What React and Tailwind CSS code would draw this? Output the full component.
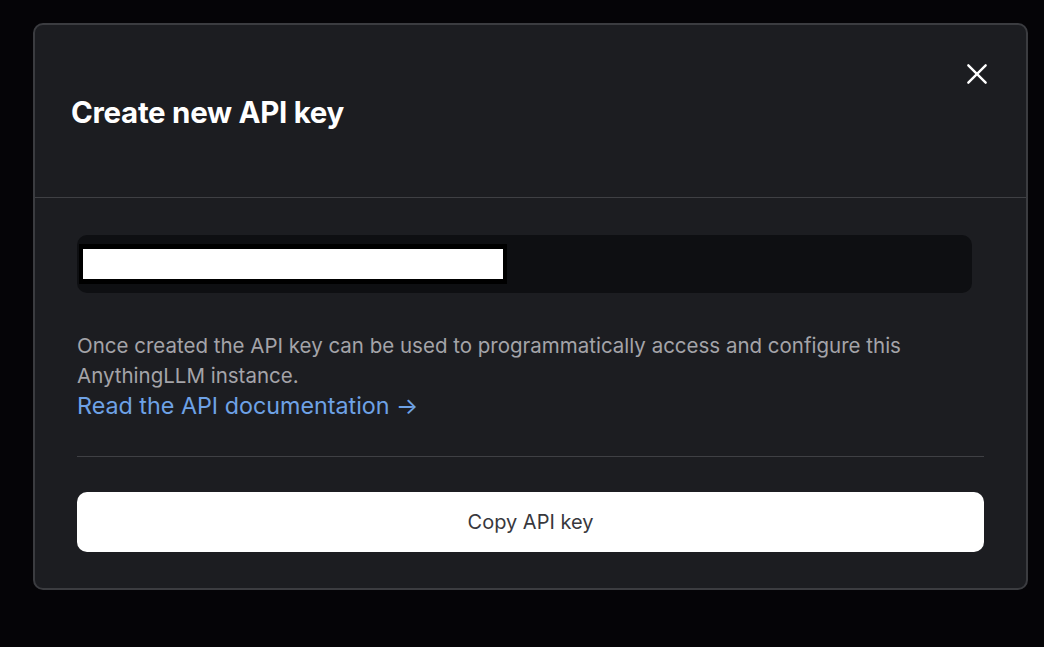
import React from 'react';

const CloseIcon = () => (
  <svg width="26" height="26" viewBox="0 0 24 24" fill="none" stroke="currentColor" strokeWidth="2.2" strokeLinecap="round">
    <path d="M4 4L20 20M20 4L4 20" />
  </svg>
);

export default function App() {
  return (
    <div
      className="w-[1044px] h-[647px] bg-[#050407] pt-[23px] pl-[33px]"
      style={{ fontFamily: 'Inter, "Noto Sans", sans-serif' }}
    >
      <div className="w-[995px] h-[567px] bg-[#1c1d21] border-2 border-[#3b3c40] rounded-[10px] flex flex-col">
        {/* header */}
        <div className="h-[173px] flex justify-between items-start pl-[36px] pr-[36px] border-b border-[#3f4044]">
          <h3 className="self-center mt-[2px] text-[29.5px] font-bold tracking-[-0.3px] text-white">
            Create new API key
          </h3>
          <button className="mt-[36px] text-white">
            <CloseIcon />
          </button>
        </div>

        {/* body */}
        <div className="flex flex-col px-[42px] pt-[37px]">
          <div className="h-[58px] mr-[12px] bg-[#0e0f12] rounded-[10px] flex items-center pl-[2px]">
            <div className="bg-black p-[5px] pl-[4px] pr-[4px]">
              <div className="w-[420px] h-[30px] bg-white" />
            </div>
          </div>

          <div className="mt-[38px] text-[20.5px] leading-[30px] text-[#a4a4a9]">
            <p>
              Once created the API key can be used to programmatically access and configure this
              AnythingLLM instance.
            </p>
            <a className="text-[#6ea2e6] block text-[23.3px] leading-[30px]">Read the API documentation &rarr;</a>
          </div>

          <div className="mt-[35px] border-t border-[#3f4044]" />

          <button className="mt-[35px] h-[60px] w-full bg-white rounded-[10px] text-[20px] text-[#38383d]">
            Copy API key
          </button>
        </div>
      </div>
    </div>
  );
}
